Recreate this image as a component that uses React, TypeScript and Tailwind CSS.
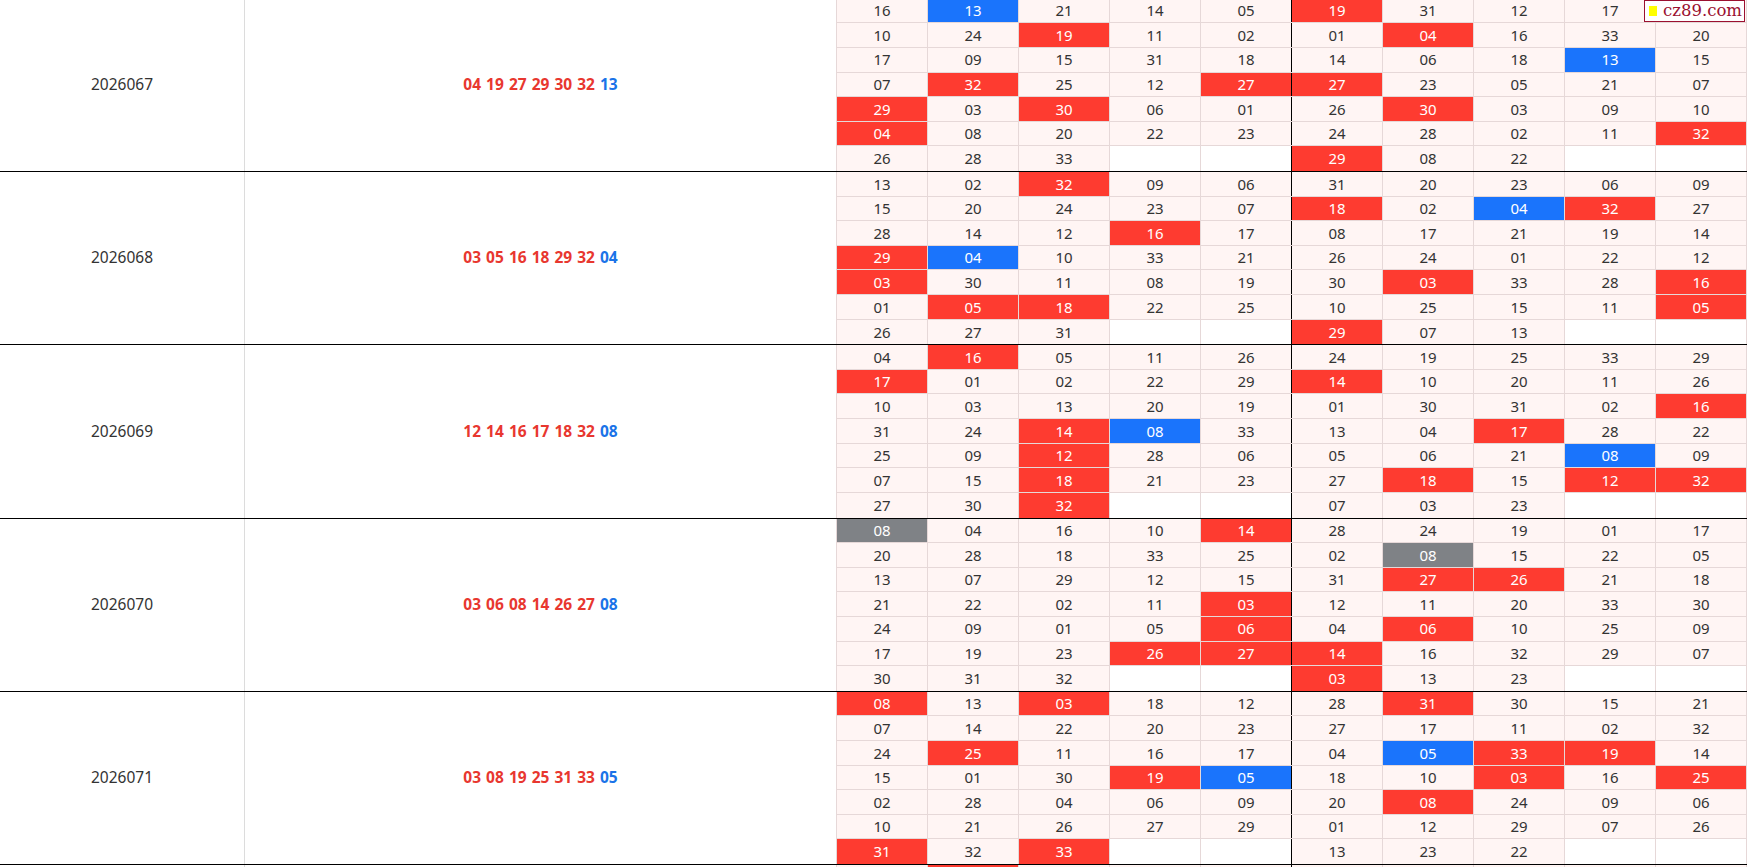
import React from 'react';

// One draw per block: period, 6 red + 1 blue, then two 5-column grids (33 numbers each, row-major).
interface Draw {
    period: string;
    red: string[];
    blue: string;
    left: string[];
    right: string[];
    peek?: boolean;
}

const DRAWS: Draw[] = [
    {
        period: '2026067',
        red: ['04', '19', '27', '29', '30', '32'],
        blue: '13',
        left: '16 13 21 14 05 10 24 19 11 02 17 09 15 31 18 07 32 25 12 27 29 03 30 06 01 04 08 20 22 23 26 28 33'.split(' '),
        right: '19 31 12 17 25 01 04 16 33 20 14 06 18 13 15 27 23 05 21 07 26 30 03 09 10 24 28 02 11 32 29 08 22'.split(' '),
    },
    {
        period: '2026068',
        red: ['03', '05', '16', '18', '29', '32'],
        blue: '04',
        left: '13 02 32 09 06 15 20 24 23 07 28 14 12 16 17 29 04 10 33 21 03 30 11 08 19 01 05 18 22 25 26 27 31'.split(' '),
        right: '31 20 23 06 09 18 02 04 32 27 08 17 21 19 14 26 24 01 22 12 30 03 33 28 16 10 25 15 11 05 29 07 13'.split(' '),
    },
    {
        period: '2026069',
        red: ['12', '14', '16', '17', '18', '32'],
        blue: '08',
        left: '04 16 05 11 26 17 01 02 22 29 10 03 13 20 19 31 24 14 08 33 25 09 12 28 06 07 15 18 21 23 27 30 32'.split(' '),
        right: '24 19 25 33 29 14 10 20 11 26 01 30 31 02 16 13 04 17 28 22 05 06 21 08 09 27 18 15 12 32 07 03 23'.split(' '),
    },
    {
        period: '2026070',
        red: ['03', '06', '08', '14', '26', '27'],
        blue: '08',
        left: '08 04 16 10 14 20 28 18 33 25 13 07 29 12 15 21 22 02 11 03 24 09 01 05 06 17 19 23 26 27 30 31 32'.split(' '),
        right: '28 24 19 01 17 02 08 15 22 05 31 27 26 21 18 12 11 20 33 30 04 06 10 25 09 14 16 32 29 07 03 13 23'.split(' '),
    },
    {
        period: '2026071',
        red: ['03', '08', '19', '25', '31', '33'],
        blue: '05',
        left: '08 13 03 18 12 07 14 22 20 23 24 25 11 16 17 15 01 30 19 05 02 28 04 06 09 10 21 26 27 29 31 32 33'.split(' '),
        right: '28 31 30 15 21 27 17 11 02 32 04 05 33 19 14 18 10 03 16 25 20 08 24 09 06 01 12 29 07 26 13 23 22'.split(' '),
    },
    // next block, only its top edge shows under the fold
    {
        period: '',
        red: ['31'],
        blue: '',
        left: '14 31 05 22 09'.split(' '),
        right: '07 12 18 26 30'.split(' '),
        peek: true,
    },
];

function cellClass(n: string | undefined, d: Draw) {
    if (!n) return 'bg-white';
    const isRed = d.red.includes(n);
    const isBlue = n === d.blue;
    if (isRed && isBlue) return 'bg-[#7f8286] text-white';
    if (isRed) return 'bg-[#fe3b30] text-white';
    if (isBlue) return 'bg-[#1a74fc] text-white';
    return 'bg-[#fff5f4] text-[#333]';
}

function DrawBlock({ d }: { d: Draw }) {
    const rows = Math.ceil(d.left.length / 5);
    const lines: { n?: string; edge: boolean }[][] = [];
    for (let r = 0; r < rows; r++) {
        const line: { n?: string; edge: boolean }[] = [];
        for (let c = 0; c < 5; c++) line.push({ n: d.left[r * 5 + c], edge: c === 4 });
        for (let c = 0; c < 5; c++) line.push({ n: d.right[r * 5 + c], edge: false });
        lines.push(line);
    }

    return (
        <div className="flex border-b border-black">
            {/* Period */}
            <div className="w-[245px] shrink-0 border-r border-[#dcdcdc] flex items-center justify-center text-[15.5px] text-[#333]">
                {d.period}
            </div>

            {/* Winning numbers */}
            <div className="w-[592px] shrink-0 border-r border-[#e6d8d8] flex items-center justify-center text-[15.5px] font-bold [word-spacing:1px]">
                {!d.peek && <span className="text-[#e8372f]">{d.red.join(' ')}</span>}
                {d.blue && <span className="text-[#1a73e8] ml-[5px]">{d.blue}</span>}
            </div>

            {/* Distribution grid */}
            <div className="w-[910px] shrink-0 flex flex-col">
                {lines.map((line, r) => (
                    <div key={r} className={`flex h-[24.61px] ${r < rows - 1 ? 'border-b border-[#e6d8d8]' : ''}`}>
                        {line.map((cell, c) => (
                            <div
                                key={c}
                                className={`w-[91px] shrink-0 flex items-center justify-center text-[15px] border-r ${cell.edge ? 'border-black' : 'border-[#e6d8d8]'} ${cellClass(cell.n, d)}`}
                            >
                                {!d.peek && cell.n}
                            </div>
                        ))}
                    </div>
                ))}
            </div>
        </div>
    );
}

export default function App() {
    return (
        <div className="relative h-screen overflow-hidden bg-white font-['Noto_Sans',sans-serif]">
            <div className="-mt-[1.3px] w-[1747px]">
                {DRAWS.map((d, i) => (
                    <DrawBlock key={i} d={d} />
                ))}
            </div>

            {/* Site badge */}
            <div className="absolute top-0 right-[2px] h-[22px] flex items-center gap-[6px] pl-[4px] pr-[2px] bg-white border border-[#9b1030]">
                <span className="w-[8px] h-[10px] bg-[#ffff00]" />
                <span className="text-[16.5px] leading-none text-[#9b1030] font-['DejaVu_Serif',serif]">cz89.com</span>
            </div>
        </div>
    );
}
